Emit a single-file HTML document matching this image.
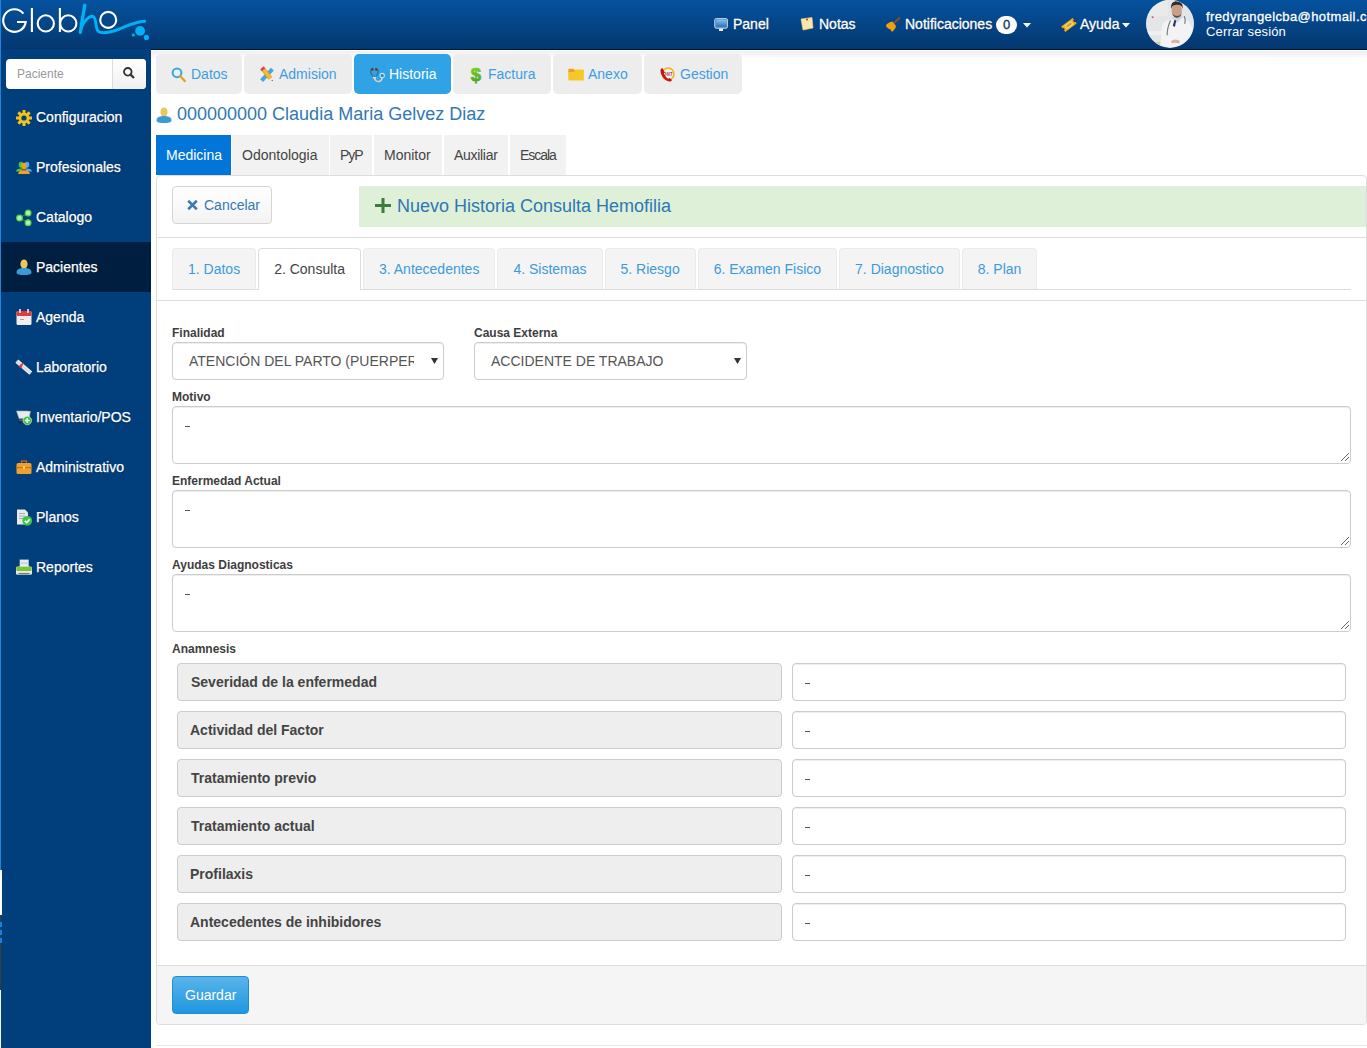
<!DOCTYPE html>
<html><head><meta charset="utf-8">
<style>
*{box-sizing:border-box;margin:0;padding:0}
html,body{width:1367px;height:1048px;overflow:hidden;background:#fff;font-family:"Liberation Sans",sans-serif;font-size:14px;color:#333}
body{position:relative}
.a{position:absolute;white-space:nowrap}
.t{position:absolute;white-space:nowrap;line-height:1}
svg{position:absolute;overflow:visible}
#hdr{left:0;top:0;width:1367px;height:49px;background:linear-gradient(#05529f,#04376f);}
#hdrline{left:151px;top:49px;width:1216px;height:1px;background:#001a38}
#side{left:0;top:49px;width:151px;height:999px;background:#003e7c}
.nv{position:absolute;left:0;width:151px;height:50px}
.nv.act{background:#001f40}
.nv .t{left:36px;top:18px;color:#fff;font-size:14px;text-shadow:0 1px 1px rgba(0,0,0,.35);-webkit-text-stroke:.25px #fff}
.hn{color:#fff;font-size:14px;top:17px;text-shadow:0 1px 1px rgba(0,0,0,.4);-webkit-text-stroke:.3px #fff}
.tab1{position:absolute;top:54px;height:40px;background:#ededed;border-radius:5px}
.tab1 .t{top:13px;color:#3d9de3;font-size:14px}
.tab1.act{background:#2fa3e5}
.tab1.act .t{color:#fff}
.tab2{position:absolute;top:135px;height:40px;background:#f2f2f2}
.tab2 .t{top:148px;color:#444;font-size:14px}
.tabs3{position:absolute;left:172px;top:248px;width:1179px;height:42px;display:flex;align-items:flex-start}
.tab3{position:relative;height:41px;background:#f4f4f4;border:1px solid #ebebeb;border-bottom:none;border-radius:4px 4px 0 0;padding:0 15px;margin-right:2px;color:#3d9ad9;font-size:14px;line-height:1;padding-top:13px;white-space:nowrap}
.tab3.act{background:#fff;border-color:#ddd;height:42px;color:#444}
.lbl{font-size:12px;font-weight:bold;color:#3e3e3e}
.sel{position:absolute;top:342px;height:38px;border:1px solid #ccc;border-radius:4px;background:#fff;box-shadow:inset 0 1px 1px rgba(0,0,0,.075);overflow:hidden}
.sel .t{top:9px;left:16px;color:#555;font-size:14px;line-height:18px}
.ta{position:absolute;left:172px;width:1179px;height:58px;border:1px solid #ccc;border-radius:4px;background:#fff;box-shadow:inset 0 1px 1px rgba(0,0,0,.075)}
.ta .d{position:absolute;left:12px;top:19px;width:5px;height:1px;background:#555}
.rl{position:absolute;left:177px;width:605px;height:38px;background:#eee;border:1px solid #ccc;border-radius:4px}
.rl .t{left:13px;top:11px;font-weight:bold;color:#444;font-size:14px}
.rr{position:absolute;left:792px;width:554px;height:38px;background:#fff;border:1px solid #ccc;border-radius:4px;box-shadow:inset 0 1px 1px rgba(0,0,0,.075)}
.rr .d{position:absolute;left:12px;top:19px;width:5px;height:1px;background:#555}
</style></head><body>

<!-- HEADER -->
<div id="hdr" class="a"></div>
<div id="hdrline" class="a"></div>


<!-- logo -->
<svg style="left:0;top:0" width="160" height="48" viewBox="0 0 160 48">
  <g fill="none" stroke="#fff" stroke-width="2.1">
    <path d="M23.4 13.6 A11.3 11.3 0 1 0 25.7 22 L17 22"/>
    <line x1="31.9" y1="8" x2="31.9" y2="32"/>
    <circle cx="45.8" cy="23.4" r="8.1"/>
    <line x1="59.9" y1="8" x2="59.9" y2="32"/>
    <circle cx="68.3" cy="23.4" r="8.1"/>
    <circle cx="108.2" cy="19.9" r="8"/>
  </g>
  <g fill="none" stroke="#02b0f5" stroke-linecap="round">
    <path d="M84.8 5.2 C83.5 12 81.5 24 80.4 32.4" stroke-width="3.4"/>
    <path d="M81.2 28 C84 21 89 15.5 93 16.5 C96.5 17.5 95 27 98 31 C101 34 110 32.5 118 29.6 C126 26.6 134 22 144.6 21.3" stroke-width="3"/>
  </g>
  <g fill="#02b0f5">
    <circle cx="140.1" cy="30.9" r="4.9"/>
    <circle cx="146.4" cy="37.4" r="2.6"/>
    <circle cx="133.3" cy="35" r="1.6"/>
  </g>
</svg>

<!-- header nav -->
<svg style="left:714px;top:17px" width="15" height="15" viewBox="0 0 15 15">
  <defs><linearGradient id="gm" x1="0" y1="0" x2="0" y2="1"><stop offset="0" stop-color="#80c8f2"/><stop offset="1" stop-color="#2a70c0"/></linearGradient></defs>
  <rect x="0.7" y="1.5" width="12.8" height="9.8" rx="1.6" fill="#5a8ac0" stroke="#b8cde0" stroke-width="1"/>
  <rect x="2.4" y="2.6" width="10.2" height="7.2" fill="url(#gm)"/>
  <rect x="5" y="11.5" width="4" height="2.6" rx=".6" fill="#f0ece4"/>
</svg>
<div class="t hn" style="left:733px">Panel</div>
<svg style="left:800px;top:17px" width="14" height="14" viewBox="0 0 14 14">
  <path d="M1 2 L12 0.5 L13 11 L3 13 Z" fill="#fae6a6" stroke="#f0d68a" stroke-width=".6"/>
  <circle cx="7" cy="2.5" r="1" fill="#d22"/>
</svg>
<div class="t hn" style="left:819px">Notas</div>
<svg style="left:885px;top:17px" width="16" height="16" viewBox="0 0 16 16">
  <path d="M1 8 C3 6 6 4 8 5 L11 9 C11 11 9 13 7 15 L5 12 C3 12 1 10 1 8 Z" fill="#f0a010"/>
  <line x1="9" y1="6" x2="15" y2="0.5" stroke="#9b4a1a" stroke-width="1.8"/>
</svg>
<div class="t hn" style="left:905px">Notificaciones</div>
<div class="a" style="left:996px;top:16px;width:21px;height:18px;border-radius:9px;background:#fff"></div>
<div class="t" style="left:1003px;top:18px;font-size:13px;color:#15365f;-webkit-text-stroke:.35px #15365f">0</div>
<svg style="left:1023px;top:23px" width="8" height="5" viewBox="0 0 8 5"><path d="M0 0 L8 0 L4 4.5 Z" fill="#fff"/></svg>
<svg style="left:1058px;top:15px" width="20" height="20" viewBox="0 0 20 20">
  <g transform="translate(10.95 9.95) rotate(-37)">
    <path d="M-7.15 -3.45 L7.15 -3.45 L7.15 -1.3 A1.3 1.3 0 0 0 7.15 1.3 L7.15 3.45 L-7.15 3.45 L-7.15 1.3 A1.3 1.3 0 0 0 -7.15 -1.3 Z" fill="#f5a810"/>
    <rect x="-4.2" y="-2.2" width="8.4" height="4.4" fill="#f8dc6a"/>
    <rect x="-3" y="-1" width="6" height="2" fill="#b8a04a"/>
  </g>
</svg>
<div class="t hn" style="left:1080px">Ayuda</div>
<svg style="left:1122px;top:23px" width="8" height="5" viewBox="0 0 8 5"><path d="M0 0 L8 0 L4 4.5 Z" fill="#fff"/></svg>

<!-- avatar -->
<svg style="left:1146px;top:0" width="48" height="48" viewBox="0 0 48 48">
  <defs><clipPath id="cav"><circle cx="24" cy="23.8" r="23.6"/></clipPath></defs>
  <circle cx="24" cy="23.8" r="24" fill="#dfe8f2"/>
  <g clip-path="url(#cav)">
    <rect x="-2" y="-2" width="52" height="52" fill="#e3e5e6"/>
    <rect x="0" y="0" width="22" height="16" fill="#e9eaea"/>
    <rect x="0" y="31" width="16" height="4" fill="#eef0f0"/>
    <rect x="0" y="42" width="16" height="6" fill="#d8c8a8"/>
    <circle cx="6.6" cy="17.2" r="1" fill="#e05060"/>
    <path d="M14 48 L15.5 30 C16 24 18 22 22 20.5 L29 19 L34 17.5 C39 18 42 20 44 24 L48 30 L48 48 Z" fill="#f3f3f5"/>
    <path d="M26 18 L31 23 L37 17 L35 15 L28 16 Z" fill="#c9d8e8"/>
    <path d="M28.4 20 L30.2 20.6 L29 26.8 L26.8 26 Z" fill="#27325a"/>
    <path d="M24.5 20.5 C22 26 21 30 21.2 35.3" stroke="#707880" stroke-width="1.1" fill="none"/>
    <path d="M38.3 16.2 C39.5 19 39.3 22 38.8 23.8" stroke="#707880" stroke-width="1.1" fill="none"/>
    <path d="M25 41 C28 39 31 39 34 41 L33 43.5 C30 42.5 28 42.5 26 43.5 Z" fill="#d9b49a"/>
    <ellipse cx="30.8" cy="10.8" rx="5.2" ry="6.8" fill="#c99f85"/>
    <path d="M26 13 C27 16.5 29 17.8 31 17.8 C33 17.8 35 16.5 35.8 13 C35 15 33 16 31 16 C29 16 27 15 26 13 Z" fill="#6a4a3a"/>
    <path d="M25.2 9 C24.5 3.5 27 1.2 31 1.2 C35 1.2 37.2 3.5 36.6 9 C36 6 34.5 4.8 31 4.8 C27.5 4.8 26 6 25.2 9 Z" fill="#3a2a22"/>
  </g>
</svg>
<div class="t" style="left:1206px;top:10px;font-size:13px;color:#fff;letter-spacing:.4px;-webkit-text-stroke:.3px #fff">fredyrangelcba@hotmail.com</div>
<div class="t" style="left:1206px;top:25px;font-size:13px;color:#fff;letter-spacing:.15px">Cerrar sesión</div>

<!-- SIDEBAR -->
<div id="side" class="a"></div>
<div class="a" style="left:6px;top:59px;width:140px;height:30px;background:#fff;border-radius:4px"></div>
<div class="a" style="left:112px;top:59px;width:34px;height:30px;background:linear-gradient(#fff,#f0f0f0);border-left:1px solid #ddd;border-radius:0 4px 4px 0"></div>
<div class="t" style="left:17px;top:68px;font-size:12px;color:#999">Paciente</div>
<svg style="left:123px;top:67px" width="12" height="12" viewBox="0 0 12 12">
  <circle cx="4.8" cy="4.8" r="3.8" fill="none" stroke="#333" stroke-width="1.8"/>
  <line x1="7.6" y1="7.6" x2="11" y2="11" stroke="#333" stroke-width="2.2"/>
</svg>

<div class="nv" style="top:92px">
  <svg style="left:16px;top:18px" width="16" height="16" viewBox="0 0 16 16">
    <g fill="#f2c21a"><circle cx="8" cy="8" r="5.5"/>
    <rect x="6.5" y="0" width="3" height="16"/><rect x="0" y="6.5" width="16" height="3"/>
    <rect x="6.5" y="0" width="3" height="16" transform="rotate(45 8 8)"/><rect x="6.5" y="0" width="3" height="16" transform="rotate(-45 8 8)"/></g>
    <circle cx="8" cy="8" r="2.6" fill="#003e7c"/>
  </svg>
  <div class="t">Configuracion</div>
</div>
<div class="nv" style="top:142px">
  <svg style="left:16px;top:18px" width="16" height="16" viewBox="0 0 16 16">
    <ellipse cx="5" cy="4.8" rx="2.3" ry="3" fill="#48c83c"/><path d="M0 11.6 C0 9.4 2 8.4 5 8.4 L6 8.4 L6 11.6 Z" fill="#48c83c"/>
    <ellipse cx="11" cy="4.8" rx="2.3" ry="3" fill="#52aee6"/><path d="M10 8.4 L11 8.4 C14 8.4 16 9.4 16 11.6 L10 11.6 Z" fill="#52aee6"/>
    <ellipse cx="8" cy="6.2" rx="2.5" ry="3.4" fill="#f59e20"/><path d="M2.2 14 C2.2 11.4 4.5 10.2 8 10.2 C11.5 10.2 13.8 11.4 13.8 14 Z" fill="#f59e20"/>
  </svg>
  <div class="t">Profesionales</div>
</div>
<div class="nv" style="top:192px">
  <svg style="left:16px;top:17px" width="16" height="16" viewBox="0 0 16 16">
    <path d="M3.5 9 L12 4 M3.5 9 L12 13.7" stroke="#2e9a3a" stroke-width="1"/>
    <circle cx="3.5" cy="9" r="2.9" fill="#b8ecb0" stroke="#4ed044" stroke-width="1.2"/>
    <circle cx="12.1" cy="4" r="2.9" fill="#b8ecb0" stroke="#4ed044" stroke-width="1.2"/>
    <circle cx="12.1" cy="13.7" r="2.9" fill="#b8ecb0" stroke="#4ed044" stroke-width="1.2"/>
  </svg>
  <div class="t">Catalogo</div>
</div>
<div class="nv act" style="top:242px">
  <svg style="left:16px;top:17px" width="16" height="16" viewBox="0 0 16 16">
    <ellipse cx="8" cy="5" rx="3.6" ry="4.6" fill="#e8c85a"/>
    <path d="M0.5 13.5 C0.5 10 4 9 8 9 C12 9 15.5 10 15.5 13.5 C15.5 15.5 12 16 8 16 C4 16 0.5 15.5 0.5 13.5 Z" fill="#3a9ad6"/>
  </svg>
  <div class="t">Pacientes</div>
</div>
<div class="nv" style="top:292px">
  <svg style="left:16px;top:17px" width="16" height="16" viewBox="0 0 16 16">
    <rect x="0.5" y="2" width="15" height="14" rx="1.5" fill="#eee"/>
    <rect x="0.5" y="2" width="15" height="5" rx="1.5" fill="#e0393e"/>
    <rect x="3" y="0" width="2" height="4" fill="#ccc"/><rect x="11" y="0" width="2" height="4" fill="#ccc"/>
    <rect x="4" y="10" width="4" height="1" fill="#e88"/>
  </svg>
  <div class="t">Agenda</div>
</div>
<div class="nv" style="top:342px">
  <svg style="left:16px;top:17px" width="16" height="16" viewBox="0 0 16 16">
    <line x1="0.8" y1="2.2" x2="14.8" y2="14.2" stroke="#e6eaee" stroke-width="4.4"/>
    <line x1="0.8" y1="2.2" x2="14.8" y2="14.2" stroke="#c4ccd4" stroke-width="1" stroke-dasharray="0 0"/>
    <path d="M3.2 6.6 L6.8 3.8 L7.6 4.8 L5.8 7.4 L6.4 9.4 L4.9 8.2 L3.6 9 Z" fill="#e23a3a"/>
  </svg>
  <div class="t">Laboratorio</div>
</div>
<div class="nv" style="top:392px">
  <svg style="left:16px;top:17px" width="16" height="16" viewBox="0 0 16 16">
    <path d="M0.5 2 L14.5 2 L13 9.5 L3 9.5 Z" fill="#e8ebee" stroke="#9aa4ac" stroke-width=".6"/>
    <path d="M12.5 2 L14 0.8 L15.5 0.8" stroke="#333" stroke-width="1.1" fill="none"/>
    <rect x="3" y="10.5" width="8" height="1.2" fill="#666"/>
    <circle cx="4" cy="13.5" r="1.1" fill="#222"/>
    <circle cx="11.3" cy="11.5" r="4.3" fill="#3cc03c" stroke="#e8f8e8" stroke-width=".6"/>
    <rect x="8.8" y="10.7" width="5" height="1.6" fill="#fff"/><rect x="10.5" y="9" width="1.6" height="5" fill="#fff"/>
  </svg>
  <div class="t">Inventario/POS</div>
</div>
<div class="nv" style="top:442px">
  <svg style="left:16px;top:17px" width="16" height="16" viewBox="0 0 16 16">
    <path d="M5.5 4 L5.5 2 L10.5 2 L10.5 4" stroke="#b8651a" stroke-width="1.4" fill="none"/>
    <rect x="0.5" y="4" width="15" height="11" rx="1.5" fill="#f0a030"/>
    <rect x="0.5" y="8" width="15" height="1.2" fill="#c8761a"/>
    <rect x="7" y="7.3" width="2" height="2.6" fill="#f6d070"/>
  </svg>
  <div class="t">Administrativo</div>
</div>
<div class="nv" style="top:492px">
  <svg style="left:16px;top:17px" width="16" height="16" viewBox="0 0 16 16">
    <path d="M1 0.5 L9 0.5 L12 3.5 L12 15.5 L1 15.5 Z" fill="#e8eaec"/>
    <rect x="3" y="4" width="6" height="1" fill="#aaa"/><rect x="3" y="6.5" width="6" height="1" fill="#aaa"/><rect x="3" y="9" width="4" height="1" fill="#aaa"/>
    <circle cx="11.2" cy="11.8" r="4.9" fill="#3cc844"/>
    <path d="M8.8 11.8 L10.7 13.6 L13.8 10.2" stroke="#fff" stroke-width="1.6" fill="none"/>
  </svg>
  <div class="t">Planos</div>
</div>
<div class="nv" style="top:542px">
  <svg style="left:16px;top:17px" width="16" height="16" viewBox="0 0 16 16">
    <rect x="3.7" y="0.6" width="9" height="7.5" fill="#e8eaec"/>
    <rect x="4.5" y="3.5" width="7.4" height="1" fill="#c0c4c8"/>
    <rect x="0" y="7.5" width="16" height="8.3" rx="1.6" fill="#e2e4e6"/>
    <rect x="0.4" y="7.8" width="15.2" height="4.2" rx="1" fill="#78c630"/>
    <rect x="2.5" y="14" width="11" height="1.2" fill="#707478"/>
  </svg>
  <div class="t">Reportes</div>
</div>

<div class="a" style="left:0;top:0;width:1px;height:870px;background:#1f84dc;z-index:5"></div>
<div class="a" style="left:0;top:870px;width:2px;height:45px;background:#fff;z-index:5"></div>
<div class="a" style="left:0;top:915px;width:1px;height:75px;background:#3c3c3c;z-index:5"></div>
<div class="a" style="left:0;top:922px;width:2px;height:5px;background:#1a80e0;z-index:5"></div>
<div class="a" style="left:0;top:930px;width:2px;height:5px;background:#1a80e0;z-index:5"></div>
<div class="a" style="left:0;top:938px;width:2px;height:5px;background:#1a80e0;z-index:5"></div>
<div class="a" style="left:0;top:990px;width:1px;height:58px;background:#f4f4f4;z-index:5"></div>
<!-- MAIN -->
<div class="a" style="left:151px;top:51px;width:1216px;height:7px;background:linear-gradient(#f0f0f0,#fcfcfc)"></div>

<div class="tab1" style="left:156px;width:86px">
  <svg style="left:15px;top:13px" width="16" height="16" viewBox="0 0 16 16">
    <circle cx="6" cy="5.8" r="4.4" fill="#e8eef2" stroke="#3aa6e2" stroke-width="2"/>
    <line x1="9.3" y1="9.3" x2="13.8" y2="14" stroke="#e8a01c" stroke-width="2.3" stroke-linecap="round"/>
  </svg>
  <div class="t" style="left:35px">Datos</div>
</div>
<div class="tab1" style="left:244px;width:108px">
  <svg style="left:15px;top:12px" width="16" height="16" viewBox="0 0 16 16">
    <line x1="13.4" y1="3.2" x2="2.6" y2="14.6" stroke="#3fa9e0" stroke-width="4"/>
    <line x1="4.2" y1="3.3" x2="11.6" y2="12.6" stroke="#f2a626" stroke-width="4.6"/>
    <line x1="4.2" y1="3.3" x2="11.6" y2="12.6" stroke="#f8c84a" stroke-width="1.4"/>
    <line x1="3" y1="1.8" x2="4.5" y2="3.7" stroke="#e0404a" stroke-width="4.6"/>
    <path d="M9.8 14.03 L13.4 11.17 L13.5 15.2 Z" fill="#f4efe6"/>
    <path d="M12.4 14.6 L13.45 13.75 L13.5 15.2 Z" fill="#111"/>
  </svg>
  <div class="t" style="left:35px">Admision</div>
</div>
<div class="tab1 act" style="left:354px;width:97px">
  <svg style="left:15px;top:12px" width="16" height="16" viewBox="0 0 16 16">
    <path d="M2 3.5 C1 6.5 3 9.5 5.5 11.5 M8.8 3.5 C9.8 6.5 8 9.5 5.5 11.5" fill="none" stroke="#2b7ba6" stroke-width="1.6"/>
    <path d="M5.5 11.5 C6 14.5 8 15.7 9.8 15.5 C12 15.3 13 13.5 13 11.5" fill="none" stroke="#e2d2c6" stroke-width="1.5"/>
    <circle cx="3.3" cy="3.4" r="1.4" fill="#6b3a22"/><circle cx="7.3" cy="3.4" r="1.4" fill="#6b3a22"/>
    <path d="M4 11 L5.5 12.5 L7 11" stroke="#e8dcd2" stroke-width="1.4" fill="none"/>
    <circle cx="13.2" cy="9.6" r="2.2" fill="#2a86b8" stroke="#bfe2f4" stroke-width="1.1"/>
  </svg>
  <div class="t" style="left:35px">Historia</div>
</div>
<div class="tab1" style="left:453px;width:98px">
  <svg style="left:15px;top:12px" width="16" height="18" viewBox="0 0 16 18">
    <defs><linearGradient id="gd" x1="0" y1="0" x2="0" y2="1"><stop offset="0" stop-color="#8ad822"/><stop offset="1" stop-color="#3c9c30"/></linearGradient></defs>
    <text x="8" y="15.3" text-anchor="middle" font-family="Liberation Sans" font-weight="bold" font-size="18.5" fill="url(#gd)" stroke="url(#gd)" stroke-width=".7">$</text>
  </svg>
  <div class="t" style="left:35px">Factura</div>
</div>
<div class="tab1" style="left:553px;width:89px">
  <svg style="left:15px;top:14px" width="17" height="13" viewBox="0 0 17 13">
    <path d="M0.3 2 Q0.3 0.8 1.5 0.8 L5.5 0.8 L7 2.2 L14.5 2.2 Q15.8 2.2 15.8 3.4 L15.8 5 L0.3 5 Z" fill="#f0a020"/>
    <path d="M0.3 4 L6 4 L7.8 1.5 L14.8 1.5 Q15.8 1.5 15.8 2.5 L15.8 11.7 Q15.8 12.5 15 12.5 L1.1 12.5 Q0.3 12.5 0.3 11.7 Z" fill="#f6c825"/>
  </svg>
  <div class="t" style="left:35px">Anexo</div>
</div>
<div class="tab1" style="left:644px;width:98px">
  <svg style="left:15px;top:12px" width="16" height="16" viewBox="0 0 16 16">
    <circle cx="9.1" cy="8" r="5.9" fill="#e8eef2" stroke="#f4b20c" stroke-width="1.5"/>
    <text x="9.2" y="9.6" text-anchor="middle" font-family="Liberation Sans" font-weight="bold" font-size="4.6" fill="#c0383c">24/7</text>
    <path d="M2.2 2.4 C1 4 1.2 7 3.5 10.5 C5.5 13.5 8 15.3 10.5 15.5 C11.8 15.5 12.8 14.8 13 14 L10.5 12 L9.3 12.8 C7.5 12 5.5 9.5 4.8 7.5 L5.6 6.3 L3.6 2.2 Z" fill="#c0141a"/>
  </svg>
  <div class="t" style="left:36px">Gestion</div>
</div>

<!-- patient name -->
<svg style="left:156px;top:107px" width="16" height="16" viewBox="0 0 16 16">
  <ellipse cx="8" cy="5" rx="3.6" ry="4.6" fill="#e8c85a"/>
  <path d="M0.5 13.5 C0.5 10 4 9 8 9 C12 9 15.5 10 15.5 13.5 C15.5 15.5 12 16 8 16 C4 16 0.5 15.5 0.5 13.5 Z" fill="#3a9ad6"/>
</svg>
<div class="t" style="left:177px;top:105px;font-size:18px;color:#3178b3">000000000 Claudia Maria Gelvez Diaz</div>

<!-- sub tabs -->
<div class="tab2" style="left:156px;width:75px;background:#0275d8"></div>
<div class="t" style="left:166px;top:148px;color:#fff;font-size:14px">Medicina</div>
<div class="tab2" style="left:232px;width:97px"></div>
<div class="t" style="left:242px;top:148px;color:#444">Odontologia</div>
<div class="tab2" style="left:330px;width:42px"></div>
<div class="t" style="left:340px;top:148px;color:#444;letter-spacing:-1.1px">PyP</div>
<div class="tab2" style="left:374px;width:68px"></div>
<div class="t" style="left:384px;top:148px;color:#444">Monitor</div>
<div class="tab2" style="left:444px;width:64px"></div>
<div class="t" style="left:454px;top:148px;color:#444;letter-spacing:-.3px">Auxiliar</div>
<div class="tab2" style="left:510px;width:56px"></div>
<div class="t" style="left:520px;top:148px;color:#444;letter-spacing:-1.05px">Escala</div>

<!-- panel -->
<div class="a" style="left:156px;top:175px;width:1211px;height:850px;border:1px solid #ddd;border-radius:4px"></div>
<div class="a" style="left:156px;top:1045px;width:1211px;height:1px;background:#e6e6e6"></div>

<!-- cancelar -->
<div class="a" style="left:172px;top:186px;width:100px;height:38px;border:1px solid #d5d5d5;border-radius:4px;background:linear-gradient(#fff,#f3f3f3)"></div>
<svg style="left:187px;top:200px" width="11" height="10" viewBox="0 0 11 10">
  <path d="M1.2 0.8 L9.8 9.2 M9.8 0.8 L1.2 9.2" stroke="#3a7cb5" stroke-width="2.6"/>
</svg>
<div class="t" style="left:204px;top:198px;color:#3579b4">Cancelar</div>

<!-- green banner -->
<div class="a" style="left:359px;top:186px;width:1007px;height:41px;background:#dff0d8"></div>
<svg style="left:375px;top:198px" width="16" height="16" viewBox="0 0 16 16">
  <rect x="6.5" y="0" width="3" height="15" fill="#3d7b3e"/><rect x="0" y="6" width="16" height="3" fill="#3d7b3e"/>
</svg>
<div class="t" style="left:397px;top:197px;font-size:18px;color:#2d77b3">Nuevo Historia Consulta Hemofilia</div>

<div class="a" style="left:157px;top:237px;width:1209px;height:1px;background:#ddd"></div>

<!-- step tabs -->
<div class="a" style="left:172px;top:289px;width:1179px;height:1px;background:#ddd"></div>
<div class="tabs3">
<div class="tab3">1. Datos</div><div class="tab3 act">2. Consulta</div><div class="tab3">3. Antecedentes</div><div class="tab3">4. Sistemas</div><div class="tab3">5. Riesgo</div><div class="tab3">6. Examen Fisico</div><div class="tab3">7. Diagnostico</div><div class="tab3">8. Plan</div>
</div>

<div class="a" style="left:157px;top:300px;width:1209px;height:1px;background:#ddd"></div>

<!-- form -->
<div class="t lbl" style="left:172px;top:327px">Finalidad</div>
<div class="sel" style="left:172px;width:272px">
  <div class="t" style="width:225px;overflow:hidden">ATENCIÓN DEL PARTO (PUERPERIO)</div>
  <svg style="left:258px;top:15px" width="7" height="6" viewBox="0 0 7 6"><path d="M0 0 L7 0 L3.5 6 Z" fill="#333"/></svg>
</div>
<div class="t lbl" style="left:474px;top:327px">Causa Externa</div>
<div class="sel" style="left:474px;width:273px">
  <div class="t">ACCIDENTE DE TRABAJO</div>
  <svg style="left:259px;top:15px" width="7" height="6" viewBox="0 0 7 6"><path d="M0 0 L7 0 L3.5 6 Z" fill="#333"/></svg>
</div>

<div class="t lbl" style="left:172px;top:391px">Motivo</div>
<div class="ta" style="top:406px"><div class="d"></div>
  <svg style="left:1167px;top:45px" width="10" height="10" viewBox="0 0 10 10"><path d="M1 9 L9 1 M5 9 L9 5" stroke="#666" stroke-width="1"/></svg>
</div>
<div class="t lbl" style="left:172px;top:475px">Enfermedad Actual</div>
<div class="ta" style="top:490px"><div class="d"></div>
  <svg style="left:1167px;top:45px" width="10" height="10" viewBox="0 0 10 10"><path d="M1 9 L9 1 M5 9 L9 5" stroke="#666" stroke-width="1"/></svg>
</div>
<div class="t lbl" style="left:172px;top:559px">Ayudas Diagnosticas</div>
<div class="ta" style="top:574px"><div class="d"></div>
  <svg style="left:1167px;top:45px" width="10" height="10" viewBox="0 0 10 10"><path d="M1 9 L9 1 M5 9 L9 5" stroke="#666" stroke-width="1"/></svg>
</div>

<div class="t lbl" style="left:172px;top:643px">Anamnesis</div>

<div class="rl" style="top:663px"><div class="t">Severidad de la enfermedad</div></div>
<div class="rr" style="top:663px"><div class="d"></div></div>
<div class="rl" style="top:711px"><div class="t" style="left:12px">Actividad del Factor</div></div>
<div class="rr" style="top:711px"><div class="d"></div></div>
<div class="rl" style="top:759px"><div class="t">Tratamiento previo</div></div>
<div class="rr" style="top:759px"><div class="d"></div></div>
<div class="rl" style="top:807px"><div class="t">Tratamiento actual</div></div>
<div class="rr" style="top:807px"><div class="d"></div></div>
<div class="rl" style="top:855px"><div class="t" style="left:12px">Profilaxis</div></div>
<div class="rr" style="top:855px"><div class="d"></div></div>
<div class="rl" style="top:903px"><div class="t" style="left:12px">Antecedentes de inhibidores</div></div>
<div class="rr" style="top:903px"><div class="d"></div></div>

<!-- footer -->
<div class="a" style="left:157px;top:965px;width:1209px;height:59px;background:#f5f5f5;border-top:1px solid #ddd;border-radius:0 0 3px 3px"></div>
<div class="a" style="left:172px;top:976px;width:77px;height:38px;border-radius:4px;background:linear-gradient(#5ab4ea,#1f97df);border:1px solid #1a8fd6"></div>
<div class="t" style="left:185px;top:988px;color:#fff">Guardar</div>

</body></html>
